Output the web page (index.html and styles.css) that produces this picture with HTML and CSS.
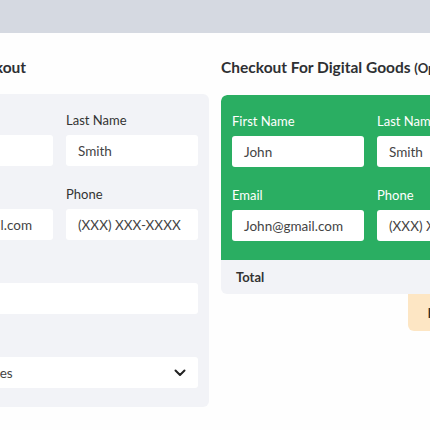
FILE: index.html
```html
<!DOCTYPE html>
<html lang="en">
<head>
<meta charset="utf-8">
<title>Checkout</title>
<link rel="stylesheet" href="styles.css">
</head>
<body>
<div class="topbar"></div>
<main class="page">
  <section class="column">
    <h2 class="title">Simple Checkout</h2>
    <div class="panel panel-light">
      <div class="grid">
        <div class="field">
          <label class="label">First Name</label>
          <div class="input">John</div>
        </div>
        <div class="field">
          <label class="label">Last Name</label>
          <div class="input">Smith</div>
        </div>
        <div class="field">
          <label class="label">Email</label>
          <div class="input">John@gmail.com</div>
        </div>
        <div class="field">
          <label class="label">Phone</label>
          <div class="input">(XXX) XXX-XXXX</div>
        </div>
        <div class="field wide">
          <label class="label">Address</label>
          <div class="input"></div>
        </div>
        <div class="field wide">
          <label class="label">Country</label>
          <div class="input select"><span>United States</span>
            <svg class="chev" width="12" height="8" viewBox="0 0 12 8"><polyline points="1.5,1.5 6,6 10.5,1.5" fill="none" stroke="#222" stroke-width="2" stroke-linecap="round" stroke-linejoin="round"/></svg>
          </div>
        </div>
      </div>
    </div>
  </section>
  <section class="column">
    <h2 class="title">Checkout For Digital Goods <span class="opt">(Optional)</span></h2>
    <div class="card">
      <div class="panel panel-green">
        <div class="grid">
          <div class="field">
            <label class="label">First Name</label>
            <div class="input">John</div>
          </div>
          <div class="field">
            <label class="label">Last Name</label>
            <div class="input">Smith</div>
          </div>
          <div class="field">
            <label class="label">Email</label>
            <div class="input">John@gmail.com</div>
          </div>
          <div class="field">
            <label class="label">Phone</label>
            <div class="input">(XXX) XXX-XXXX</div>
          </div>
        </div>
      </div>
      <div class="total">Total</div>
    </div>
    <div class="actions"><button class="btn">Place Order</button></div>
  </section>
</main>
</body>
</html>
```
FILE: styles.css
```css
html, body {
  margin: 0;
  padding: 0;
  background: #fefefe;
  overflow: hidden;
  font-family: "Lato", "Noto Sans", sans-serif;
  color: #333;
}
.topbar {
  height: 33px;
  background: #d5d9e1;
}
.page {
  display: flex;
  gap: 12px;
  margin-left: -90px;
  padding-top: 23px;
}
.column {
  flex: none;
  width: 299px;
}
.title {
  margin: 0 0 16px;
  font-size: 15.5px;
  line-height: 22px;
  font-weight: 700;
  color: #2e3033;
  white-space: nowrap;
}
.opt {
  font-size: 13px;
}
.panel {
  border-radius: 6px;
  padding: 17px 11px 19px;
}
.panel-light {
  background: #f2f3f7;
}
.panel-green {
  background: #2aae62;
  border-radius: 6px 6px 0 0;
}
.panel-green .label {
  color: #fff;
}
.grid {
  display: grid;
  grid-template-columns: 132px 132px;
  column-gap: 13px;
  row-gap: 19px;
}
.wide {
  grid-column: 1 / -1;
}
.field {
  display: flex;
  flex-direction: column;
}
.label {
  font-size: 13px;
  line-height: 18px;
  color: #333;
  margin-bottom: 6px;
}
.input {
  height: 31px;
  box-sizing: border-box;
  background: #fff;
  border-radius: 3px;
  padding: 0 12px;
  display: flex;
  align-items: center;
  font-size: 13.5px;
  color: #444;
  white-space: nowrap;
  overflow: hidden;
}
.select {
  justify-content: space-between;
}
.chev {
  flex: none;
}
.card {
  border-radius: 6px;
  overflow: hidden;
}
.total {
  height: 34px;
  background: #f2f3f7;
  padding: 0 15px;
  display: flex;
  align-items: center;
  font-size: 13px;
  font-weight: 700;
  color: #333;
}
.actions {
  display: flex;
  justify-content: flex-end;
}
.btn {
  height: 37px;
  border: none;
  background: #fde6c4;
  border-radius: 0 0 6px 6px;
  padding: 0 19px;
  font-family: inherit;
  font-size: 14px;
  font-weight: 700;
  color: #333;
}
```
